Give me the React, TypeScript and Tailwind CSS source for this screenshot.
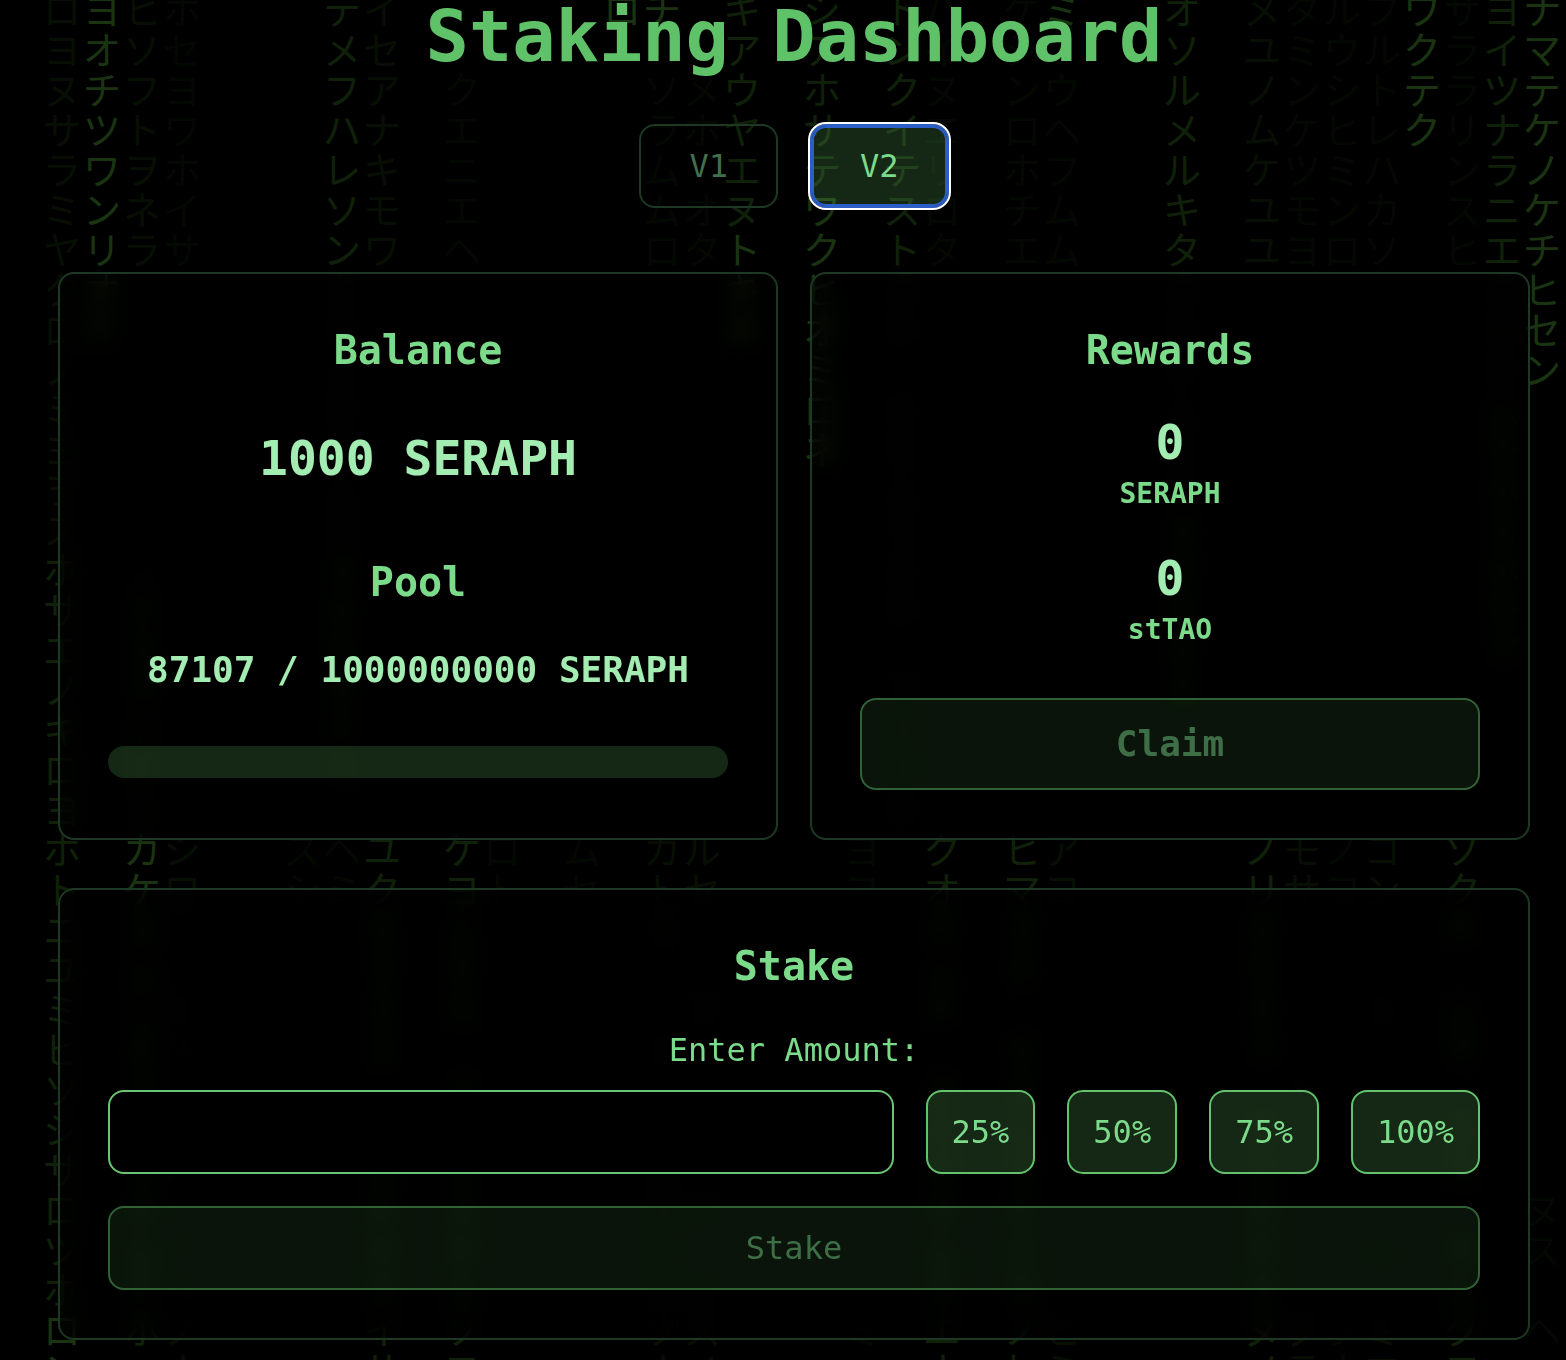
import type React from "react";
import { useState } from "react";

type Tone = "dim" | "soft" | "mid" | "bright";

const tones: Record<Tone, string> = {
  dim: "text-[#040802]",
  soft: "text-[#070f04]",
  mid: "text-[#10210a]",
  bright: "text-[#1a3411]",
};

// One entry per falling column, from left to right. "　" leaves a cell empty.
const rain: [Tone, string][][] = [
  [],
  [["soft", "ロヨヌサラミヤクロノミヨヲス"], ["mid", "ホサエノキロヨホトニユミヒソシサロツホ"], ["bright", "ロン"]],
  [["bright", "ヨオチツワンリオケ"]],
  [["soft", "ヒソフトヲネラ　　　　　　　ノ"], ["mid", "クヌマシテ"], ["soft", "ヨ"], ["bright", "カケ"], ["mid", "ヌムニオヲホマチムケホ"]],
  [["dim", "ホセヨワホイサ　　　　　　　　　　　　　　"], ["soft", "シロ"], ["dim", "ムニオヲコマチムケモ"], ["soft", "ノナ"]],
  [],
  [],
  [["dim", "　　　　　　　　　　　　　　　　　　　　　スシ"]],
  [["mid", "テメフハレソン"], ["soft", "クネスホマムキ"], ["mid", "ヌホモネケソ"], ["dim", "　ヘミ"]],
  [["soft", "イセアナキモワ　　　　　　　　　　　　　　"], ["mid", "ユクホマネヌ　ミムキホオイサ"]],
  [],
  [["dim", "　　クエニエヘ　　　　　　　　　　　　　　"], ["mid", "ケヨムホモ　クシキネホムソヨ"]],
  [["dim", "　　　　　　　　　　　　　　　　　　　　　ロト"]],
  [],
  [["dim", "　　　　　　　　　　　　　　　　　　　　　ムセ"]],
  [["bright", "ロ"]],
  [["bright", "チ"], ["dim", "　ソラムムロ　　　　　　　　　　　　　　"], ["soft", "カトヨ　　ミ　　ムホキネソナ"]],
  [["dim", "　　メホ　オタ　　　　　　　　　　　　　　"], ["soft", "ルセ　　マ　　ム　ホ　キスメ"]],
  [["mid", "キアウヤエヌ"], ["bright", "トキホ"]],
  [],
  [["mid", "シアホサテ"], ["bright", "ワクヒオミロネ"]],
  [["dim", "　　　　　　　　　　　　　　　　　　　　　ヨヨ　　　　　　　　　　ミ"]],
  [["mid", "トンクイテスト"], ["soft", "ネホ　キモムスヌホ　マモホネ"]],
  [["dim", "ハイヌエリロタ　　　　　　　　　　　　　　"], ["mid", "クオホムキ　ネモホサムキエナ"]],
  [],
  [["dim", "ケシンロホチエ　　　　　　　　　　　　　　"], ["mid", "ヒマネホ　キモムヌケミホノヒ"]],
  [["bright", "ミ"], ["dim", "　ウヘフムム　　　　　　　　　　　　　　"], ["soft", "アコ　　　　　　　　　　ヒミ"]],
  [],
  [],
  [["mid", "オソルメルキタ"], ["soft", "ネホキムスホ"], ["mid", "ヌマモホネ"]],
  [],
  [["soft", "メユノムケユユ　　　　　　　　　　　　　　"], ["mid", "ノリホモネマ　キムホキネヌメ"]],
  [["dim", "タミンケツモヨ　　　　　　　　　　　　　　"], ["soft", "モサ　　　　ム　　　　　クテ"]],
  [["dim", "ルウシヒミンロ　　　　　　　　　　　　　　ノコ　　　　　　　　　　クナ"]],
  [["dim", "フルトレハカソ　　　　　　　　　　　　　　"], ["soft", "コン　　ミ　　キ　　ム　ミエ"]],
  [["bright", "ワクテク"]],
  [["dim", "サララリンスヒ　　　　　　　　　　　　　　"], ["mid", "ソクキ　ムネ　ホモ　キムクコ"]],
  [["mid", "ヨイツナラニエ"], ["soft", "ネホキ"], ["mid", "ムモホヌホモマ"]],
  [["bright", "ナマテケノケチヒセン"], ["dim", "　　　　　　　　　　　　　　　　　　　　ヌス　ヘ"]],
];

const Rain = () => (
  <div
    aria-hidden="true"
    className="absolute -top-3 bottom-0 left-0.5 right-0 flex overflow-hidden text-[38px] select-none font-['Noto_Sans_CJK_JP',sans-serif]"
  >
    {rain.map((drops, i) => (
      <div key={i} className="w-10 shrink-0">
        {drops.map(([tone, text], j) => (
          <div key={j} className={tones[tone]}>
            {[...text].map((char, k) => (
              <div key={k} className="h-10 text-center leading-10">
                {char}
              </div>
            ))}
          </div>
        ))}
      </div>
    ))}
  </div>
);

const Card = ({ children }: { children: React.ReactNode }) => (
  <section className="rounded-2xl border-2 border-[#1d3923] bg-black/40 p-12 text-center backdrop-blur-md">
    {children}
  </section>
);

const CardTitle = ({ children }: { children: React.ReactNode }) => (
  <h2 className="text-[40px] leading-14 font-bold text-[#7bdb8a]">{children}</h2>
);

const Reward = ({ value, unit }: { value: string; unit: string }) => (
  <div className="mt-8 font-bold">
    <p className="text-5xl leading-16 text-[#a3edb2]">{value}</p>
    <p className="text-[28px] leading-10 text-[#7bdb8a]">{unit}</p>
  </div>
);

const actionStyle =
  "w-full rounded-2xl border-2 border-[#63c36c] bg-[#68c868]/20 px-6 py-4 text-[#7bdb8a] disabled:opacity-50";

const App = () => {
  const [version, setVersion] = useState("V2");
  const [amount, setAmount] = useState("");
  const balance = 1000;
  const staked = 87107;
  const capacity = 1000000000;

  return (
    <div className="relative min-h-screen overflow-hidden bg-black font-['DejaVu_Sans_Mono',monospace]">
      <Rain />
      <main className="relative pr-9 pb-5 pl-[58px]">
        <h1 className="text-center text-7xl leading-[72px] font-bold text-[#60c268]">
          Staking Dashboard
        </h1>

        <div className="mt-[52px] flex justify-center gap-8">
          {["V1", "V2"].map((name) => (
            <button
              key={name}
              type="button"
              aria-pressed={version === name}
              onClick={() => setVersion(name)}
              className={
                version === name
                  ? "rounded-2xl border-2 border-[#2b5fc7] bg-[#68c868]/20 px-12 py-4 text-[32px] leading-12 text-[#7bdb8a] inset-ring-2 inset-ring-[#2b5fc7] outline-2 outline-white"
                  : "rounded-2xl border-2 border-[#1d3923] px-12 py-4 text-[32px] leading-12 text-[#426f4b]"
              }
            >
              {name}
            </button>
          ))}
        </div>

        <div className="mt-16 grid grid-cols-1 gap-8 md:grid-cols-2">
          <Card>
            <CardTitle>Balance</CardTitle>
            <p className="mt-12 text-5xl leading-16 font-bold text-[#a3edb2]">
              {balance} SERAPH
            </p>
            <div className="mt-16">
              <CardTitle>Pool</CardTitle>
            </div>
            <p className="mt-8 text-4xl leading-14 font-bold text-[#a3edb2]">
              {staked} / {capacity} SERAPH
            </p>
            <div className="mt-12 h-8 overflow-hidden rounded-full bg-[#68c868]/20">
              <div
                className="h-full bg-[#60c268]"
                style={{ width: `${(staked / capacity) * 100}%` }}
              />
            </div>
          </Card>

          <Card>
            <CardTitle>Rewards</CardTitle>
            <Reward value="0" unit="SERAPH" />
            <Reward value="0" unit="stTAO" />
            <button
              type="button"
              disabled
              className={`mt-12 text-4xl leading-14 font-bold ${actionStyle}`}
            >
              Claim
            </button>
          </Card>
        </div>

        <div className="mt-12">
          <Card>
            <CardTitle>Stake</CardTitle>
            <label
              htmlFor="amount"
              className="mt-8 block text-[32px] leading-12 text-[#7bdb8a]"
            >
              Enter Amount:
            </label>
            <div className="mt-4 flex gap-8">
              <input
                id="amount"
                type="text"
                value={amount}
                onChange={(e) => setAmount(e.target.value)}
                className="min-w-0 flex-1 rounded-2xl border-2 border-[#68c572] bg-black px-6 py-4 text-[32px] leading-12 text-[#7bdb8a] outline-none"
              />
              {[25, 50, 75, 100].map((percent) => (
                <button
                  key={percent}
                  type="button"
                  onClick={() => setAmount(String((balance * percent) / 100))}
                  className="rounded-2xl border-2 border-[#63c36c] bg-[#68c868]/20 px-6 py-4 text-[32px] leading-12 text-[#7bdb8a]"
                >
                  {percent}%
                </button>
              ))}
            </div>
            <button
              type="button"
              disabled={!amount}
              className={`mt-8 text-[32px] leading-12 ${actionStyle}`}
            >
              Stake
            </button>
          </Card>
        </div>
      </main>
    </div>
  );
};

export default App;
